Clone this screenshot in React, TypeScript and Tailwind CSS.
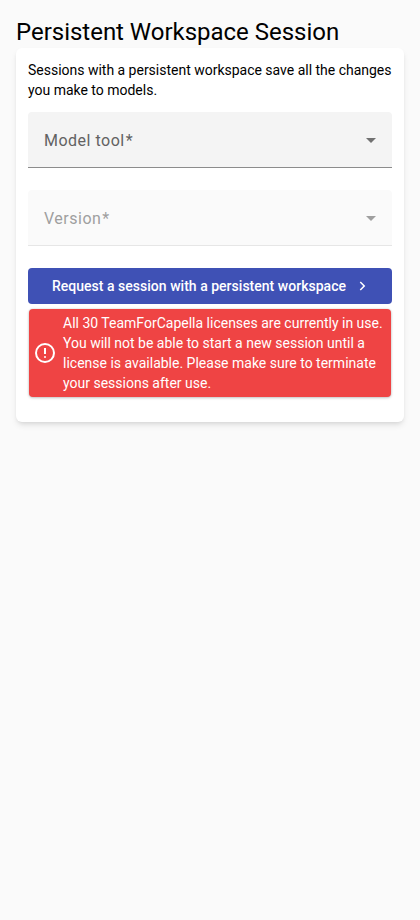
import React from "react";

function SelectField({ label, disabled = false }: { label: string; disabled?: boolean }) {
  return (
    <div
      className={
        disabled
          ? "flex h-14 items-center justify-between rounded-t border-b border-[#e6e6e6] bg-[#fafafa] px-4 pt-0.5 text-[#9f9f9f]"
          : "flex h-14 items-center justify-between rounded-t border-b border-[#8c8c8c] bg-[#f4f4f4] px-4 pt-0.5 text-[#626262]"
      }
    >
      <span className="text-base leading-6 tracking-[0.5px]">
        {label}
        <span className="ml-px">*</span>
      </span>
      <svg className={disabled ? "h-[5px] w-[10px] text-[#9f9f9f]" : "h-[5px] w-[10px] text-[#717171]"} viewBox="0 0 10 5" fill="currentColor">
        <path d="M0 0h10L5 5z" />
      </svg>
    </div>
  );
}

export default function App() {
  return (
    <main className="min-h-screen bg-[#fafafa] px-4 pt-4 font-['Roboto',sans-serif] text-black">
      <h1 className="text-2xl leading-8 tracking-[-0.02px]">Persistent Workspace Session</h1>
      <section className="h-[374px] rounded-md bg-white p-3 shadow-md">
        <p className="-mr-2 text-sm leading-5 tracking-[-0.01px]">
          Sessions with a persistent workspace save all the changes
          <br />
          you make to models.
        </p>
        <div className="mt-3 flex flex-col gap-[22px]">
          <SelectField label="Model tool" />
          <SelectField label="Version" disabled />
        </div>
        <button className="mt-[22px] flex h-9 w-full items-center justify-center gap-[7px] rounded bg-[#3f51b5] pl-[3px] text-sm font-medium text-white">
          <span className="tracking-[0.02px]">Request a session with a persistent workspace</span>
          <svg className="h-[18px] w-[18px]" viewBox="0 0 24 24" fill="currentColor">
            <path d="M10.4 18 9 16.6l4.6-4.6L9 7.4 10.4 6l6 6z" />
          </svg>
        </button>
        <div className="mx-px mt-[5px] flex items-center gap-1.5 rounded-sm bg-[#ef4444] px-1 py-1 text-sm leading-5 text-white shadow-[0_1px_3px_rgba(0,0,0,0.2),0_0_2px_rgba(0,0,0,0.15)]">
          <svg className="mb-px h-6 w-6 shrink-0" viewBox="0 0 24 24" fill="currentColor">
            <path d="M11 7h2v6h-2zm1-5a10 10 0 1 0 0 20 10 10 0 0 0 0-20zm0 18a8 8 0 1 1 0-16 8 8 0 0 1 0 16z" />
            <circle cx="12" cy="16" r="1" />
          </svg>
          <p>
            All 30 TeamForCapella licenses are currently in use. You will not be able to start a new session until a license is available. Please make sure to terminate your sessions after use.
          </p>
        </div>
      </section>
    </main>
  );
}
